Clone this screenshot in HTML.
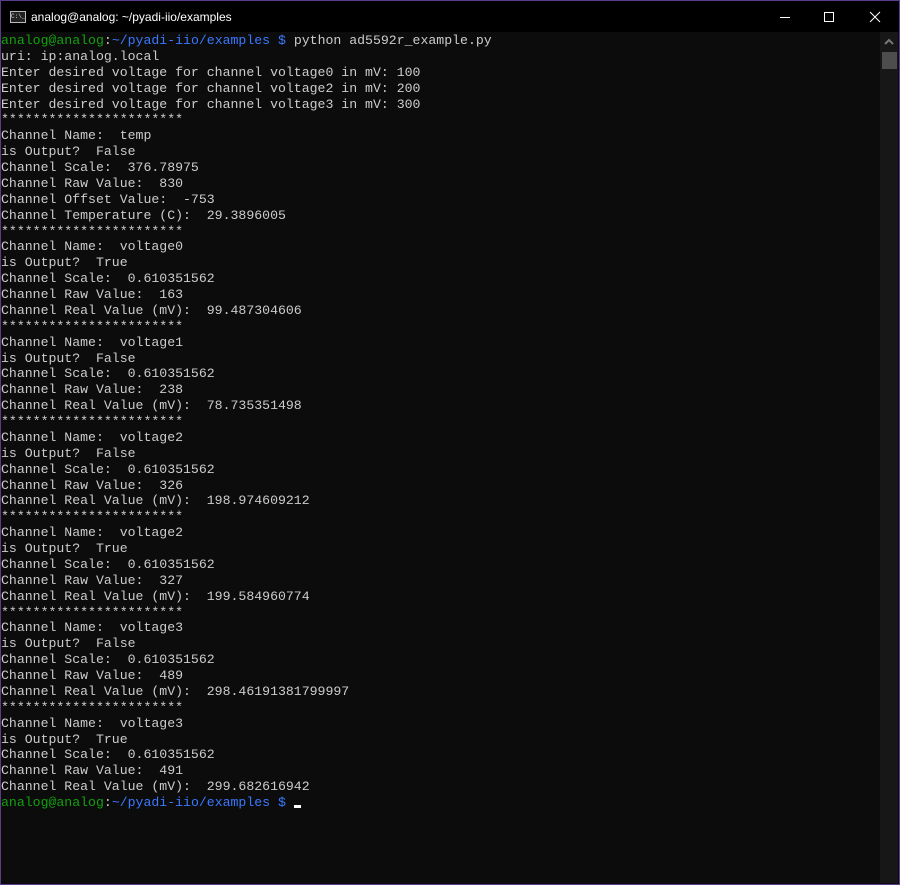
<!DOCTYPE html>
<html><head><style>
body{margin:0;width:900px;height:885px;background:#5a3c8c;overflow:hidden;position:relative}
#win{position:absolute;left:1px;top:1px;width:898px;height:883px;background:#0c0c0c}
#title{position:absolute;left:0;top:0;width:898px;height:31px;background:#000;color:#fff;font:12px "Liberation Sans",sans-serif}
#title .t{position:absolute;left:30px;top:9px}
#icon{position:absolute;left:9px;top:10px;width:14px;height:10px;border:1px solid #bbb;background:#222;font:6px "Liberation Mono",monospace;color:#ddd;line-height:10px;overflow:hidden}
pre{position:absolute;left:0px;top:32px;margin:0;font:13.2px/15.875px "Liberation Mono",monospace;color:#cccccc}
.g{color:#13a10e}.b{color:#3b78ff}
#sb{position:absolute;left:879px;top:31px;width:18px;height:851px;background:#171717}
#thumb{position:absolute;left:881px;top:51px;width:15px;height:17px;background:#4d4d4d}
</style></head><body><div id="win">
<div id="title"><div id="icon">C:\_</div><span class="t">analog@analog: ~/pyadi-iio/examples</span>
<svg style="position:absolute;left:770px;top:10px" width="120" height="14"><line x1="9" y1="6.5" x2="19" y2="6.5" stroke="#fff"/><rect x="53.5" y="1.5" width="9" height="9" fill="none" stroke="#fff"/><path d="M99 1 L109 11 M109 1 L99 11" stroke="#fff"/></svg></div>
<div id="sb"></div><div id="thumb"></div>
<svg style="position:absolute;left:882px;top:37px" width="12" height="8"><path d="M2 6 L6 2 L10 6" stroke="#777" stroke-width="2" fill="none"/></svg>
<pre><span class="g">analog@analog</span>:<span class="b">~/pyadi-iio/examples $</span> python ad5592r_example.py
uri: ip:analog.local
Enter desired voltage for channel voltage0 in mV: 100
Enter desired voltage for channel voltage2 in mV: 200
Enter desired voltage for channel voltage3 in mV: 300
***********************
Channel Name:  temp
is Output?  False
Channel Scale:  376.78975
Channel Raw Value:  830
Channel Offset Value:  -753
Channel Temperature (C):  29.3896005
***********************
Channel Name:  voltage0
is Output?  True
Channel Scale:  0.610351562
Channel Raw Value:  163
Channel Real Value (mV):  99.487304606
***********************
Channel Name:  voltage1
is Output?  False
Channel Scale:  0.610351562
Channel Raw Value:  238
Channel Real Value (mV):  78.735351498
***********************
Channel Name:  voltage2
is Output?  False
Channel Scale:  0.610351562
Channel Raw Value:  326
Channel Real Value (mV):  198.974609212
***********************
Channel Name:  voltage2
is Output?  True
Channel Scale:  0.610351562
Channel Raw Value:  327
Channel Real Value (mV):  199.584960774
***********************
Channel Name:  voltage3
is Output?  False
Channel Scale:  0.610351562
Channel Raw Value:  489
Channel Real Value (mV):  298.46191381799997
***********************
Channel Name:  voltage3
is Output?  True
Channel Scale:  0.610351562
Channel Raw Value:  491
Channel Real Value (mV):  299.682616942
<span class="g">analog@analog</span>:<span class="b">~/pyadi-iio/examples $</span> <span style="display:inline-block;width:7px;height:3px;background:#fff;vertical-align:-2px"></span></pre>
</div></body></html>
